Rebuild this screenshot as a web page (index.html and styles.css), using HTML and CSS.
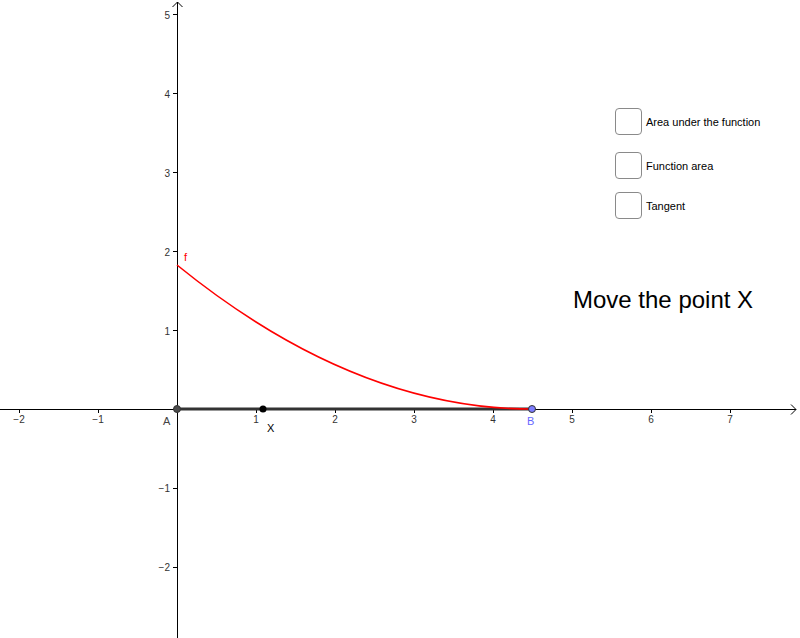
FILE: index.html
```html
<!DOCTYPE html>
<html>
<head>
<meta charset="utf-8">
<link rel="stylesheet" href="styles.css">
</head>
<body>
<div class="board">
<svg class="graph" width="800" height="638" viewBox="0 0 800 638" xmlns="http://www.w3.org/2000/svg">
  <!-- axes -->
  <line x1="0" y1="409.5" x2="796" y2="409.5" class="axis"/>
  <line x1="177.5" y1="638" x2="177.5" y2="2" class="axis"/>
  <polyline points="791,404.5 796,409.5 791,414.5" class="arrow"/>
  <polyline points="172.5,7 177.5,2 182.5,7" class="arrow"/>
  <!-- ticks -->
  <g class="tick">
    <line x1="19.5" y1="409" x2="19.5" y2="413"/>
    <line x1="98.5" y1="409" x2="98.5" y2="413"/>
    <line x1="256.5" y1="409" x2="256.5" y2="413"/>
    <line x1="335.5" y1="409" x2="335.5" y2="413"/>
    <line x1="414.5" y1="409" x2="414.5" y2="413"/>
    <line x1="493.5" y1="409" x2="493.5" y2="413"/>
    <line x1="572.5" y1="409" x2="572.5" y2="413"/>
    <line x1="651.5" y1="409" x2="651.5" y2="413"/>
    <line x1="730.5" y1="409" x2="730.5" y2="413"/>
    <line x1="173" y1="14.5" x2="177" y2="14.5"/>
    <line x1="173" y1="93.5" x2="177" y2="93.5"/>
    <line x1="173" y1="172.5" x2="177" y2="172.5"/>
    <line x1="173" y1="251.5" x2="177" y2="251.5"/>
    <line x1="173" y1="330.5" x2="177" y2="330.5"/>
    <line x1="173" y1="488.5" x2="177" y2="488.5"/>
    <line x1="173" y1="567.5" x2="177" y2="567.5"/>
  </g>
  <g class="xlab">
    <text x="19" y="423">−2</text>
    <text x="98" y="423">−1</text>
    <text x="256" y="423">1</text>
    <text x="335" y="423">2</text>
    <text x="414" y="423">3</text>
    <text x="493" y="423">4</text>
    <text x="572" y="423">5</text>
    <text x="651" y="423">6</text>
    <text x="730" y="423">7</text>
  </g>
  <g class="ylab">
    <text x="170" y="18.5">5</text>
    <text x="170" y="97.5">4</text>
    <text x="170" y="176.5">3</text>
    <text x="170" y="255.5">2</text>
    <text x="170" y="334.5">1</text>
    <text x="170" y="492">−1</text>
    <text x="170" y="571">−2</text>
  </g>
  <!-- segment A-B -->
  <line x1="177" y1="409" x2="532" y2="409" class="seg"/>
  <!-- function -->
  <path d="M177,265 Q354.5,409 532,409" class="curve"/>
  <text x="184" y="261" class="flab">f</text>
  <!-- points -->
  <circle cx="177" cy="409" r="3.5" class="ptA"/>
  <circle cx="263" cy="409" r="3.5" class="ptX"/>
  <circle cx="532" cy="409" r="3.5" class="ptB"/>
  <text x="163" y="425" class="plab">A</text>
  <text x="267" y="432" class="plab xl">X</text>
  <text x="527" y="425" class="plab bl">B</text>
</svg>
<div class="controls">
  <label class="cb"><span class="box"></span><span class="cbtext">Area under the function</span></label>
  <label class="cb"><span class="box"></span><span class="cbtext">Function area</span></label>
  <label class="cb"><span class="box"></span><span class="cbtext">Tangent</span></label>
</div>
<div class="title">Move the point X</div>
</div>
</body>
</html>
```
FILE: styles.css
```css
html, body {
  margin: 0;
  padding: 0;
  background: #fff;
  font-family: "Liberation Sans", Arial, sans-serif;
}
.board {
  position: relative;
  width: 800px;
  height: 638px;
  overflow: hidden;
}
.graph {
  display: block;
}
.axis {
  stroke: #000;
  stroke-width: 1;
}
.arrow {
  fill: none;
  stroke: #000;
  stroke-width: 1;
}
.tick line {
  stroke: #000;
  stroke-width: 1;
}
.xlab text {
  font-family: "Liberation Sans", Arial, sans-serif;
  font-size: 10px;
  fill: #333;
  text-anchor: middle;
}
.ylab text {
  font-family: "Liberation Sans", Arial, sans-serif;
  font-size: 10px;
  fill: #333;
  text-anchor: end;
}
.seg {
  stroke: #333;
  stroke-width: 3;
}
.curve {
  fill: none;
  stroke: #ff0000;
  stroke-width: 1.6;
}
.flab {
  font-family: "Liberation Sans", Arial, sans-serif;
  font-size: 11px;
  fill: #ff0000;
}
.ptA {
  fill: #4d4d4d;
  stroke: #333;
  stroke-width: 1;
}
.ptX {
  fill: #000;
}
.ptB {
  fill: #7d7dff;
  stroke: #333;
  stroke-width: 1;
}
.plab {
  font-family: "Liberation Sans", Arial, sans-serif;
  font-size: 11px;
  fill: #444;
}
.plab.xl {
  fill: #000;
}
.plab.bl {
  fill: #6666ff;
}
.controls {
  position: absolute;
  left: 615px;
  top: 108px;
  display: flex;
  flex-direction: column;
  gap: 17px;
}
.cb {
  display: flex;
  align-items: center;
  gap: 4px;
  height: 27px;
}
.box {
  box-sizing: border-box;
  width: 27px;
  height: 27px;
  border: 1.5px solid #8a8a8a;
  border-radius: 4px;
  background: #fff;
}
.cbtext {
  font-size: 11px;
  color: #000;
}
.controls .cb:nth-child(3) {
  margin-top: -4px;
}
.title {
  position: absolute;
  left: 573px;
  top: 286px;
  font-size: 24px;
  color: #000;
  white-space: nowrap;
}
```
